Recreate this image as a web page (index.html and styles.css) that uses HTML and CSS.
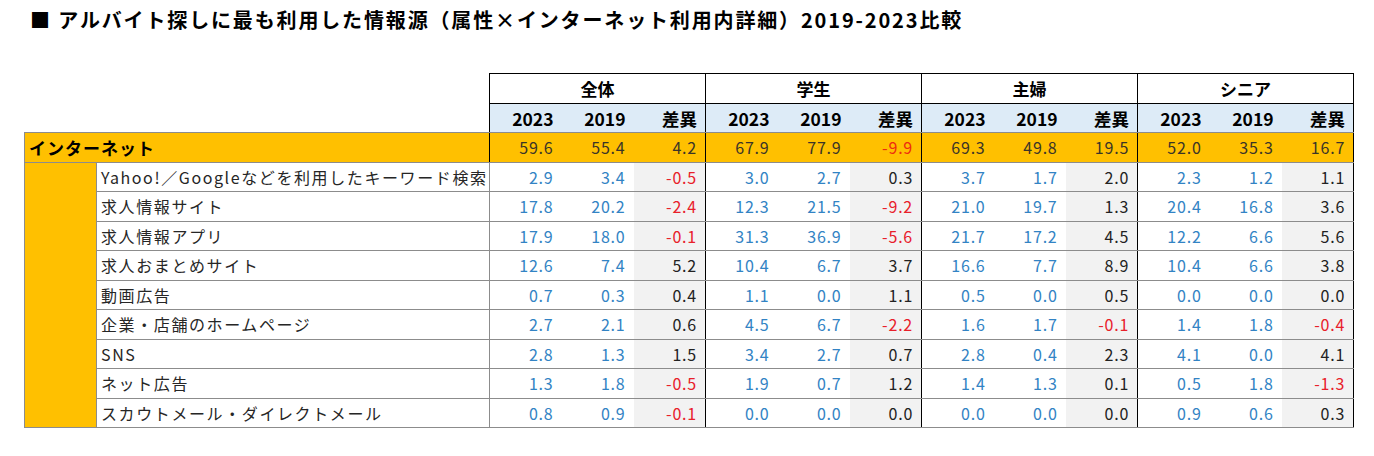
FILE: index.html
```html
<!DOCTYPE html>
<html lang="ja">
<head>
<meta charset="utf-8">
<link rel="stylesheet" href="styles.css">
</head>
<body>
<h1 class="title">■ アルバイト探しに最も利用した情報源（属性×インターネット利用内詳細）2019-2023比較</h1>
<table class="tbl">
<colgroup>
<col class="c1"><col class="c2">
<col class="cd"><col class="cd"><col class="cd">
<col class="cd"><col class="cd"><col class="cd">
<col class="cd"><col class="cd"><col class="cd">
<col class="cd"><col class="cd"><col class="cd">
</colgroup>
<thead>
<tr class="h1">
<td class="blank" colspan="2" rowspan="2"></td>
<th colspan="3" class="grp">全体</th>
<th colspan="3" class="grp">学生</th>
<th colspan="3" class="grp">主婦</th>
<th colspan="3" class="grp">シニア</th>
</tr>
<tr class="h2">
<th class="g">2023</th><th>2019</th><th>差異</th>
<th class="g">2023</th><th>2019</th><th>差異</th>
<th class="g">2023</th><th>2019</th><th>差異</th>
<th class="g">2023</th><th>2019</th><th>差異</th>
</tr>
</thead>
<tbody>
<tr class="total">
<td class="cat" colspan="2">インターネット</td>
<td class="g">59.6</td><td>55.4</td><td>4.2</td>
<td class="g">67.9</td><td>77.9</td><td class="neg">-9.9</td>
<td class="g">69.3</td><td>49.8</td><td>19.5</td>
<td class="g">52.0</td><td>35.3</td><td class="last">16.7</td>
</tr>
<tr>
<td class="side" rowspan="9"></td>
<td class="label">Yahoo!／Googleなどを利用したキーワード検索</td>
<td class="g v">2.9</td><td class="v">3.4</td><td class="d neg">-0.5</td>
<td class="g v">3.0</td><td class="v">2.7</td><td class="d">0.3</td>
<td class="g v">3.7</td><td class="v">1.7</td><td class="d">2.0</td>
<td class="g v">2.3</td><td class="v">1.2</td><td class="d last">1.1</td>
</tr>
<tr>
<td class="label">求人情報サイト</td>
<td class="g v">17.8</td><td class="v">20.2</td><td class="d neg">-2.4</td>
<td class="g v">12.3</td><td class="v">21.5</td><td class="d neg">-9.2</td>
<td class="g v">21.0</td><td class="v">19.7</td><td class="d">1.3</td>
<td class="g v">20.4</td><td class="v">16.8</td><td class="d last">3.6</td>
</tr>
<tr>
<td class="label">求人情報アプリ</td>
<td class="g v">17.9</td><td class="v">18.0</td><td class="d neg">-0.1</td>
<td class="g v">31.3</td><td class="v">36.9</td><td class="d neg">-5.6</td>
<td class="g v">21.7</td><td class="v">17.2</td><td class="d">4.5</td>
<td class="g v">12.2</td><td class="v">6.6</td><td class="d last">5.6</td>
</tr>
<tr>
<td class="label">求人おまとめサイト</td>
<td class="g v">12.6</td><td class="v">7.4</td><td class="d">5.2</td>
<td class="g v">10.4</td><td class="v">6.7</td><td class="d">3.7</td>
<td class="g v">16.6</td><td class="v">7.7</td><td class="d">8.9</td>
<td class="g v">10.4</td><td class="v">6.6</td><td class="d last">3.8</td>
</tr>
<tr>
<td class="label">動画広告</td>
<td class="g v">0.7</td><td class="v">0.3</td><td class="d">0.4</td>
<td class="g v">1.1</td><td class="v">0.0</td><td class="d">1.1</td>
<td class="g v">0.5</td><td class="v">0.0</td><td class="d">0.5</td>
<td class="g v">0.0</td><td class="v">0.0</td><td class="d last">0.0</td>
</tr>
<tr>
<td class="label">企業・店舗のホームページ</td>
<td class="g v">2.7</td><td class="v">2.1</td><td class="d">0.6</td>
<td class="g v">4.5</td><td class="v">6.7</td><td class="d neg">-2.2</td>
<td class="g v">1.6</td><td class="v">1.7</td><td class="d neg">-0.1</td>
<td class="g v">1.4</td><td class="v">1.8</td><td class="d neg last">-0.4</td>
</tr>
<tr>
<td class="label">SNS</td>
<td class="g v">2.8</td><td class="v">1.3</td><td class="d">1.5</td>
<td class="g v">3.4</td><td class="v">2.7</td><td class="d">0.7</td>
<td class="g v">2.8</td><td class="v">0.4</td><td class="d">2.3</td>
<td class="g v">4.1</td><td class="v">0.0</td><td class="d last">4.1</td>
</tr>
<tr>
<td class="label">ネット広告</td>
<td class="g v">1.3</td><td class="v">1.8</td><td class="d neg">-0.5</td>
<td class="g v">1.9</td><td class="v">0.7</td><td class="d">1.2</td>
<td class="g v">1.4</td><td class="v">1.3</td><td class="d">0.1</td>
<td class="g v">0.5</td><td class="v">1.8</td><td class="d neg last">-1.3</td>
</tr>
<tr>
<td class="label">スカウトメール・ダイレクトメール</td>
<td class="g v">0.8</td><td class="v">0.9</td><td class="d neg">-0.1</td>
<td class="g v">0.0</td><td class="v">0.0</td><td class="d">0.0</td>
<td class="g v">0.0</td><td class="v">0.0</td><td class="d">0.0</td>
<td class="g v">0.9</td><td class="v">0.6</td><td class="d last">0.3</td>
</tr>
</tbody>
</table>
</body>
</html>
```

FILE: styles.css
```css
html, body {
  margin: 0;
  padding: 0;
  background: #ffffff;
}
body {
  font-family: "Noto Sans CJK JP", "Noto Sans", sans-serif;
  color: #1a1a1a;
}
.title {
  margin: 0;
  padding: 6px 0 0 30px;
  height: 28px;
  font-size: 20px;
  line-height: 28px;
  font-weight: 700;
  letter-spacing: 1.85px;
  color: #000;
  white-space: nowrap;
}
.tbl {
  margin: 39px 0 0 24px;
  border-collapse: collapse;
  table-layout: fixed;
  width: 1330px;
}
.c1 { width: 72px; }
.c2 { width: 393px; }
.cd { width: 72px; }
.tbl td, .tbl th {
  padding: 0 8px 0 0;
  font-size: 16px;
  white-space: nowrap;
  overflow: hidden;
}
.blank {
  border: none;
}
.h1 th {
  height: 29px;
  background: #ffffff;
  border: 1px solid #000;
  text-align: center;
  font-weight: 700;
  font-size: 17px;
  padding: 0;
  color: #000;
}
.h2 th {
  height: 28px;
  background: #ddebf7;
  text-align: right;
  font-weight: 700;
  font-size: 17.5px;
  color: #000;
  border-top: 1px solid #000;
  border-bottom: 1px solid #8c8c8c;
}
.h2 th.g { border-left: 1px solid #000; }
.h2 th:last-child { border-right: 1px solid #000; }
.tbl tbody td {
  height: 28.5px;
  text-align: right;
  letter-spacing: 0.8px;
  border-top: 1px solid #8c8c8c;
  border-bottom: 1px solid #8c8c8c;
}
.tbl tbody td.g { border-left: 1px solid #000; }
.tbl tbody td.last { border-right: 1px solid #000; }
.total td {
  background: #ffc000;
  color: #3a3428;
}
.tbl tbody td.cat {
  text-align: left;
  font-weight: 700;
  font-size: 17px;
  color: #000;
  padding-left: 4px;
  letter-spacing: 1px;
  border-left: 1px solid #8c8c8c;
}
.tbl tbody td.side {
  background: #ffc000;
  border-left: 1px solid #8c8c8c;
  border-right: 1px solid #8c8c8c;
  border-bottom: 1px solid #8c8c8c;
}
.tbl tbody td.label {
  text-align: left;
  padding-left: 4px;
  letter-spacing: 1.6px;
  color: #262626;
  border-right: 1px solid #8c8c8c;
}
.v { color: #3283c4; }
.d { background: #f2f2f2; color: #222; }
.tbl tbody td.neg { color: #e8202a; }
.tbl .total td.neg { color: #ee2a10; }
```
